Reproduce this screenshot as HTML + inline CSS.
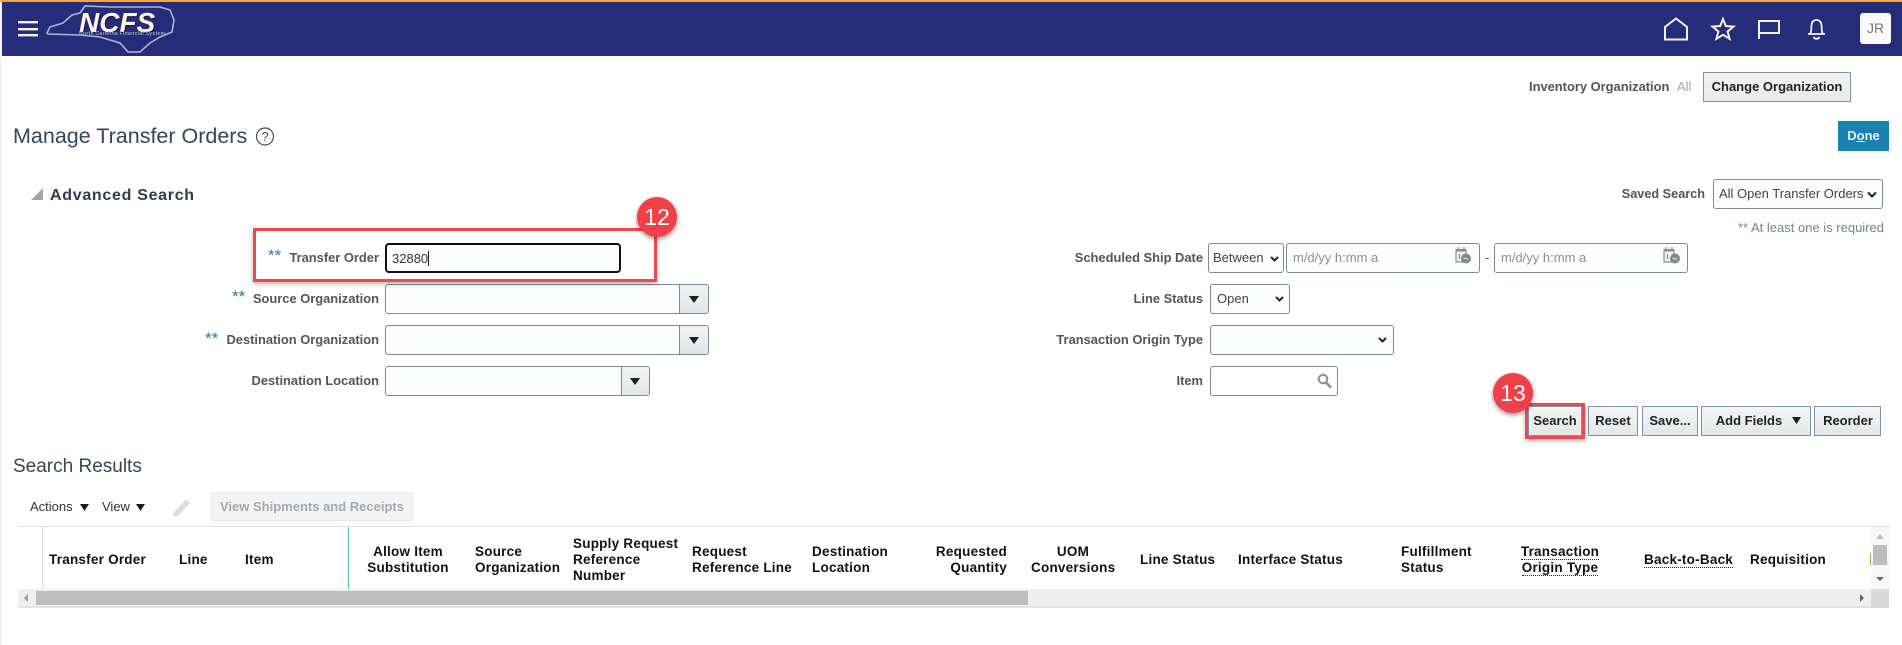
<!DOCTYPE html>
<html lang="en"><head><meta charset="utf-8"><title>Manage Transfer Orders</title>
<style>
html,body{margin:0;padding:0;background:#fff}
body{width:1902px;height:645px;position:relative;overflow:hidden;font-family:"Liberation Sans",sans-serif;color:#4b4b4b}
.a{position:absolute;white-space:nowrap}
.lab{position:absolute;white-space:nowrap;font-weight:bold;font-size:12.9px;line-height:16px;color:#555}
.r1{right:1523px}.r2{right:699px}
.st{position:absolute;white-space:nowrap;font-size:17px;line-height:20px;color:#2f77ae}
.inp{position:absolute;box-sizing:border-box;border:1px solid #7d8a94;border-radius:3px;background:#fcfdfe;height:30px}
.dd{position:absolute;box-sizing:border-box;border:1px solid #7d8a94;background:linear-gradient(#f1f3f4,#e2e6e8);border-radius:0 3px 3px 0;height:30px;width:30px}
.btn{position:absolute;box-sizing:border-box;border:1px solid #8094a8;background:linear-gradient(#f3f5f6,#e4e7e9);height:30px;font-weight:bold;font-size:13px;line-height:27px;text-align:center;color:#222;white-space:nowrap}
.sel{font-size:13px;line-height:27px;padding-left:6px;color:#444}
.th{position:absolute;font-weight:bold;font-size:13.5px;line-height:16px;color:#111;white-space:nowrap;letter-spacing:.23px}
.dot{border-bottom:1px dotted #222;display:inline-block;line-height:15px}
.badge{position:absolute;border-radius:50%;background:#f1404a;color:#fff;text-align:center;box-shadow:0 2px 5px rgba(90,20,20,.5);font-size:23px}
.red{position:absolute;box-sizing:border-box;border:3px solid #ec4a4e;box-shadow:0 2px 4px rgba(70,30,30,.35)}
svg{position:absolute;left:0;top:0}
</style></head><body>
<div class="a" style="left:0;top:0;width:2px;height:645px;background:#f3f3f3"></div>
<div class="a" style="left:2px;top:2px;width:1900px;height:54px;background:#252c7a"></div>
<div class="a" style="left:0;top:0;width:1902px;height:2px;background:#f7a73a"></div>

<svg width="1902" height="645" viewBox="0 0 1902 645" style="z-index:1">
<g fill="#f4f0e6"><rect x="18" y="21" width="20" height="2.4"/><rect x="18" y="28" width="20" height="2.4"/><rect x="18" y="34" width="20" height="2.4"/></g>
<path d="M47 33 50 27 63 23 72 15 80 13 85 6 110 7 160 7 170 10 174 20 172 32 160 37 150 43 140 52 128 52 120 43 100 37 80 35 48 34Z" fill="none" stroke="#aeb3d2" stroke-width="1.6"/>
<g fill="none" stroke="#f4f1ea" stroke-width="2">
<path d="M1665 39.5V27L1676 18.5 1687 27V39.5Z"/>
<path d="M1723 19 1725.8 26 1733.5 26.6 1727.6 31.5 1729.6 38.8 1723 34.8 1716.4 38.8 1718.4 31.5 1712.5 26.6 1720.2 26Z"/>
<path d="M1759 39V21H1779V33H1759"/>
<path d="M1808 34H1825M1810 34C1812 31 1811 28 1811.5 25C1812 21 1814 20 1816.5 20C1819 20 1821 21 1821.5 25C1822 28 1821 31 1823 34M1813.5 37C1815 39.5 1818 39.5 1819.5 37" stroke-width="1.8"/>
</g>
<path d="M31 200 43 188V200Z" fill="#a3a5a7"/>
<circle cx="265" cy="136.500" r="8.500" fill="none" stroke="#3f4d5c" stroke-width="1.200"/>
<!-- dropdown arrows -->
<g fill="#1d1d1d">
<path d="M689 296H699L694 303ZM689 337H699L694 344ZM630 378H640L635 385Z"/>
<path d="M80 504H89L84.500 511ZM136 504H145L140.500 511Z"/>
</g>
<!-- select chevrons -->
<g fill="none" stroke="#222" stroke-width="2">
<path d="M1868 192.500 1872 196.500 1876 192.500"/>
<path d="M1271 257 1274.500 260.500 1278 257"/>
<path d="M1276 297 1279.500 300.500 1283 297"/>
<path d="M1379 338 1382.500 341.500 1386 338"/>
</g>
<!-- calendar icons -->
<g>
<path d="M1456 250H1466V262H1456Z" fill="#eef0f1" stroke="#8a8f93" stroke-width="1.200"/><rect x="1456" y="249" width="10" height="2.500" fill="#8a8f93"/><path d="M1458 247v2M1464 247v2M1459.500 254v5" stroke="#8a8f93" stroke-width="1.200"/>
<circle cx="1466" cy="258.500" r="5" fill="#85898d"/>
<path d="M1463.500 258.500h3l1.500 1" stroke="#e8e8e8" fill="none"/>
<path d="M1664 250H1674V262H1664Z" fill="#eef0f1" stroke="#8a8f93" stroke-width="1.200"/><rect x="1664" y="249" width="10" height="2.500" fill="#8a8f93"/><path d="M1666 247v2M1672 247v2M1667.500 254v5" stroke="#8a8f93" stroke-width="1.200"/>
<circle cx="1675" cy="258.500" r="5" fill="#85898d"/>
<path d="M1672.500 258.500h3l1.500 1" stroke="#e8e8e8" fill="none"/>
</g>
<!-- item search -->
<circle cx="1323" cy="379" r="4.300" fill="none" stroke="#8b8f92" stroke-width="2"/>
<path d="M1326 382.500 1331 387.500" stroke="#8b8f92" stroke-width="2.600"/>
<!-- pencil -->
<path d="M186 499 190 503 178 516 173 517 174 512Z" fill="#dcdedf"/>
<!-- table lines -->
<rect x="18" y="526" width="1871" height="1" fill="#dfdfdf"/>
<rect x="42" y="527" width="1" height="62" fill="#dedede"/>
<rect x="348" y="527" width="1" height="62" fill="#5fb3c6"/>
<rect x="18" y="589" width="1853" height="17" fill="#efefef"/>
<rect x="36" y="591" width="992" height="14" fill="#bdbdbd"/>
<rect x="18" y="606" width="1853" height="2" fill="#e2e2e2"/>
<rect x="1871" y="527" width="18" height="62" fill="#f8f8f8"/>
<rect x="1871" y="589" width="18" height="19" fill="#d9d9d9"/>
<rect x="1873" y="545" width="14" height="20" fill="#bdbdbd"/>
<path d="M1880 534 1884 539H1876Z" fill="#bdbdbd"/>
<path d="M1876 577H1884L1880 581Z" fill="#666"/>
<path d="M28 594 24 598 28 602Z" fill="#9a9a9a"/>
<path d="M1860 594 1864 598 1860 602Z" fill="#666"/>
<rect x="1870" y="553" width="1" height="12" fill="#c9993f"/>
</svg>

<div class="a" style="z-index:2;left:79px;top:7px;font:italic bold 28px/32px 'Liberation Sans',sans-serif;color:#fff4df;text-shadow:1px 1px 1px #10164f">NCFS</div>
<div class="a" style="z-index:2;left:79px;top:31px;font:bold 5px/6px 'Liberation Sans',sans-serif;color:#9fa4c6;letter-spacing:.3px">North Carolina Financial System</div>
<div class="a" style="z-index:2;left:1860px;top:13px;width:31px;height:31px;border-radius:3px;background:#fafafa;color:#777;font-size:14px;line-height:31px;text-align:center">JR</div>

<div class="lab" style="left:1529px;top:79px">Inventory Organization</div>
<div class="a" style="left:1677px;top:79px;font-size:13px;line-height:16px;color:#a5a5a5">All</div>
<div class="btn" style="left:1703px;top:72px;width:148px;background:linear-gradient(#f2f3f4,#e8eaec)">Change Organization</div>

<div class="a" style="left:13px;top:123px;font-size:21.5px;line-height:26px;color:#33475b">Manage Transfer Orders</div>
<div class="a" style="left:261.500px;top:128px;font-size:13px;line-height:17px;color:#3f4d5c">?</div>
<div class="a" style="left:1838px;top:121px;width:51px;height:30px;background:#1a82b0;color:#e6f4f8;font-weight:bold;font-size:13px;line-height:30px;text-align:center">D<u>o</u>ne</div>

<div class="a" style="left:50px;top:186px;font-weight:bold;font-size:16px;line-height:20px;letter-spacing:.7px;color:#2c3e50">Advanced Search</div>
<div class="lab" style="right:197px;top:186px;font-size:12.7px">Saved Search</div>
<div class="inp sel" style="left:1713px;top:179px;width:170px;padding-left:5px">All Open Transfer Orders</div>
<div class="a" style="left:1738px;top:220px;font-size:13px;line-height:16px;color:#6e8a90">** At least one is required</div>

<!-- left form -->
<div class="st" style="left:268px;top:246px">**</div><div class="lab r1" style="top:250px">Transfer Order</div>
<div class="inp" style="left:385px;top:243px;width:236px;height:30px;border:2px solid #111;border-radius:4px;font-size:13px;line-height:27px;padding-left:5px;color:#333">32880<span style="display:inline-block;width:1px;height:15px;background:#222;vertical-align:-3px"></span></div>
<div class="st" style="left:232px;top:287px">**</div><div class="lab r1" style="top:291px">Source Organization</div>
<div class="inp" style="left:385px;top:284px;width:295px;border-radius:3px 0 0 3px"></div><div class="dd" style="left:679px;top:284px"></div>
<div class="st" style="left:205px;top:329px">**</div><div class="lab r1" style="top:332px">Destination Organization</div>
<div class="inp" style="left:385px;top:325px;width:295px;border-radius:3px 0 0 3px"></div><div class="dd" style="left:679px;top:325px"></div>
<div class="lab r1" style="top:373px">Destination Location</div>
<div class="inp" style="left:385px;top:366px;width:237px;border-radius:3px 0 0 3px"></div><div class="dd" style="left:621px;top:366px;width:29px"></div>
<div class="red" style="left:253px;top:228px;width:404px;height:54px"></div>
<div class="badge" style="left:637px;top:197px;width:40px;height:40px;line-height:40px">12</div>

<!-- right form -->
<div class="lab r2" style="top:250px">Scheduled Ship Date</div>
<div class="inp sel" style="left:1208px;top:243px;width:76px;padding-left:4px">Between</div>
<div class="inp sel" style="left:1286px;top:243px;width:194px;color:#8f8f8f">m/d/yy h:mm a</div>
<div class="a" style="left:1485px;top:250px;font-size:13px;line-height:16px">-</div>
<div class="inp sel" style="left:1494px;top:243px;width:194px;color:#8f8f8f">m/d/yy h:mm a</div>
<div class="lab r2" style="top:291px">Line Status</div>
<div class="inp sel" style="left:1210px;top:284px;width:80px">Open</div>
<div class="lab r2" style="top:332px">Transaction Origin Type</div>
<div class="inp" style="left:1210px;top:325px;width:184px"></div>
<div class="lab r2" style="top:373px">Item</div>
<div class="inp" style="left:1210px;top:366px;width:128px;background:transparent"></div>

<div class="btn" style="left:1528px;top:406px;width:54px">Search</div>
<div class="btn" style="left:1588px;top:406px;width:50px">Reset</div>
<div class="btn" style="left:1642px;top:406px;width:56px">Save...</div>
<div class="btn" style="left:1701px;top:406px;width:110px;padding-right:14px">Add Fields</div>
<div class="btn" style="left:1814px;top:406px;width:67px;padding-left:1px">Reorder</div>
<svg width="1902" height="645" viewBox="0 0 1902 645" style="z-index:2;pointer-events:none"><path d="M1792 417H1801L1796.500 424Z" fill="#1d1d1d"/></svg>
<div class="red" style="left:1525px;top:403px;width:60px;height:36px"></div>
<div class="badge" style="left:1493px;top:373px;width:40px;height:40px;line-height:40px">13</div>

<!-- results -->
<div class="a" style="left:13px;top:455px;font-size:19px;line-height:23px;color:#33475b">Search Results</div>
<div class="a" style="left:30px;top:499px;font-size:13px;line-height:16px;color:#333">Actions</div>
<div class="a" style="left:102px;top:499px;font-size:13px;line-height:16px;color:#333">View</div>
<div class="a" style="left:211px;top:492px;box-sizing:border-box;width:202px;height:29px;background:#f3f4f5;border:1px solid #e4e6e8;border-radius:2px;color:#a6a8aa;font-weight:bold;font-size:13px;line-height:27px;text-align:center">View Shipments and Receipts</div>

<div class="th" style="left:49px;top:552px">Transfer Order</div>
<div class="th" style="left:179px;top:552px">Line</div>
<div class="th" style="left:245px;top:552px">Item</div>
<div class="th" style="left:349px;width:118px;top:544px;text-align:center">Allow Item<br>Substitution</div>
<div class="th" style="left:475px;top:544px">Source<br>Organization</div>
<div class="th" style="left:573px;top:536px">Supply Request<br>Reference<br>Number</div>
<div class="th" style="left:692px;top:544px">Request<br>Reference Line</div>
<div class="th" style="left:812px;top:544px">Destination<br>Location</div>
<div class="th" style="right:895px;top:544px;text-align:right">Requested<br>Quantity</div>
<div class="th" style="left:1031px;width:84px;top:544px;text-align:center">UOM<br>Conversions</div>
<div class="th" style="left:1140px;top:552px">Line Status</div>
<div class="th" style="left:1238px;top:552px">Interface Status</div>
<div class="th" style="left:1401px;top:544px">Fulfillment<br>Status</div>
<div class="th" style="left:1520px;width:80px;top:544px;text-align:center"><span class="dot">Transaction</span><br><span class="dot">Origin Type</span></div>
<div class="th" style="left:1644px;top:552px"><span class="dot">Back-to-Back</span></div>
<div class="th" style="left:1750px;top:552px">Requisition</div>
</body></html>
